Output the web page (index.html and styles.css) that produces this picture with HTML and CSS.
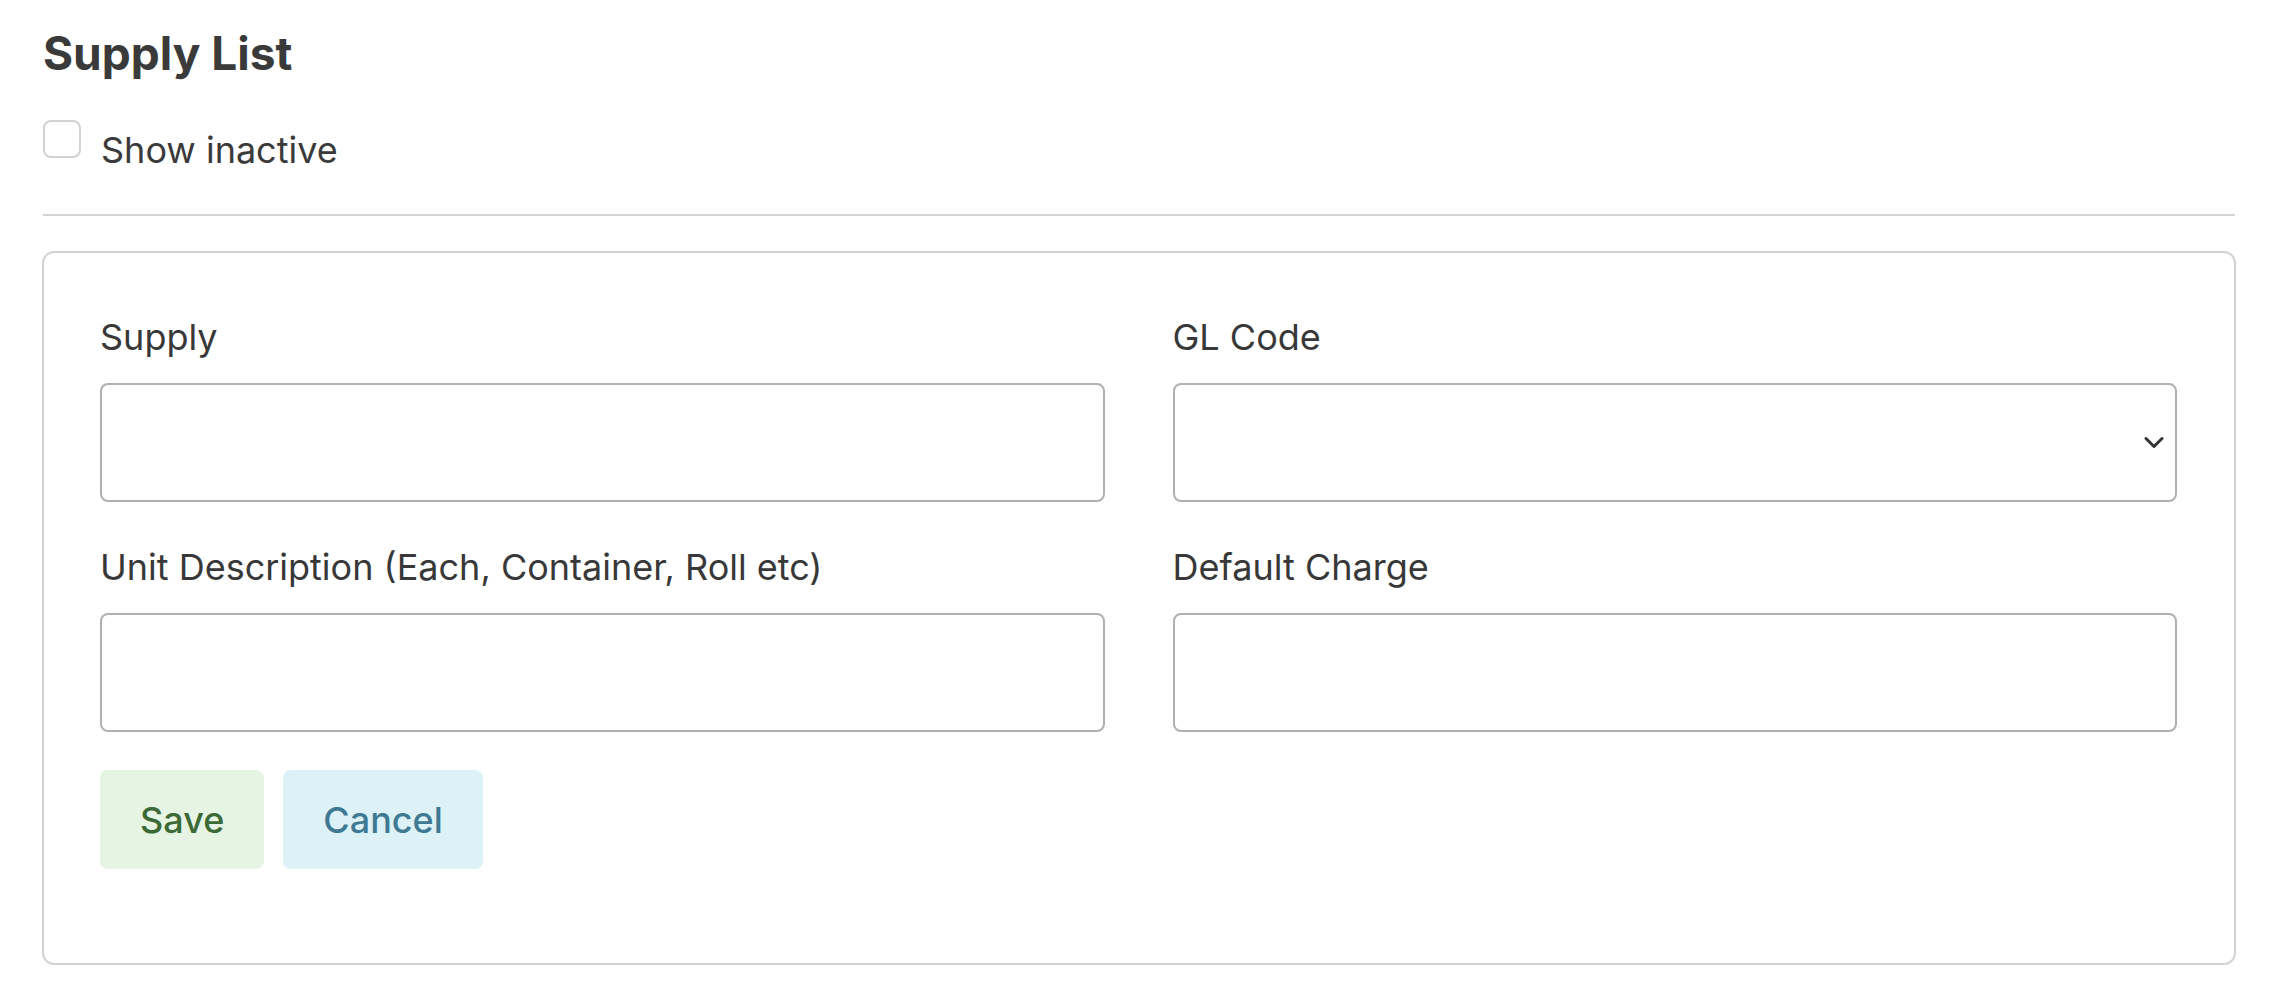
FILE: index.html
```html
<!DOCTYPE html>
<html lang="en">
<head>
<meta charset="utf-8">
<title>Supply List</title>
<link rel="stylesheet" href="styles.css">
</head>
<body>
<div class="page">
  <h1 class="title">Supply List</h1>
  <label class="check-row">
    <input type="checkbox" class="check">
    <span class="check-text">Show inactive</span>
  </label>
  <hr class="rule">
  <form class="card">
    <div class="grid">
      <div class="group">
        <label class="label">Supply</label>
        <input class="field" type="text">
      </div>
      <div class="group">
        <label class="label">GL Code</label>
        <div class="select-wrap">
          <select class="field select"><option></option></select>
          <svg class="chevron" viewBox="0 0 20 14" width="20" height="14"><path d="M2 2.5 L10 10.5 L18 2.5" fill="none" stroke="#333" stroke-width="3" stroke-linecap="round" stroke-linejoin="round"/></svg>
        </div>
      </div>
      <div class="group">
        <label class="label">Unit Description (Each, Container, Roll etc)</label>
        <input class="field" type="text">
      </div>
      <div class="group">
        <label class="label">Default Charge</label>
        <input class="field" type="text">
      </div>
    </div>
    <div class="actions">
      <button type="button" class="btn btn-save">Save</button>
      <button type="button" class="btn btn-cancel">Cancel</button>
    </div>
  </form>
</div>
</body>
</html>
```

FILE: styles.css
```css
* { box-sizing: border-box; }
html, body { margin: 0; padding: 0; background: #fff; }
body {
  font-family: Inter, "Noto Sans", "Liberation Sans", sans-serif;
  color: #333;
}
.page {
  padding: 25px 42px 0 42px;
}
.title {
  margin: 0;
  font-size: 46px;
  line-height: 57px;
  font-weight: 700;
  color: #3a3a3a;
  padding-left: 1px;
}
.check-row {
  display: flex;
  align-items: flex-start;
  margin-top: 38px;
  padding-left: 1px;
}
.check {
  appearance: none;
  -webkit-appearance: none;
  width: 38px;
  height: 38px;
  margin: 0;
  border: 2px solid #d2d2d2;
  border-radius: 8px;
  background: #fff;
  flex: none;
}
.check-text {
  margin-left: 20px;
  margin-top: 3px;
  font-size: 36px;
  line-height: 54px;
  color: #3a3a3a;
}
.rule {
  margin: 37px 1px 0 1px;
  border: 0;
  height: 2px;
  background: #d4d4d4;
}
.card {
  margin-top: 35px;
  border: 2px solid #d3d3d3;
  border-radius: 12px;
  padding: 57px 57px 56px 56px;
}
.grid {
  display: grid;
  grid-template-columns: 1fr 1fr;
  column-gap: 68px;
}
.group {
  display: flex;
  flex-direction: column;
  margin-bottom: 38px;
}
.label {
  font-size: 36px;
  line-height: 54px;
  color: #383838;
  margin-bottom: 19px;
}
.field {
  display: block;
  width: 100%;
  height: 119px;
  border: 2px solid #b0b0b0;
  border-radius: 8px;
  background: #fff;
  font-family: inherit;
  font-size: 36px;
  padding: 0 20px;
  margin: 0;
  outline: none;
}
.select-wrap {
  position: relative;
}
.select {
  appearance: none;
  -webkit-appearance: none;
}
.chevron {
  position: absolute;
  right: 13px;
  top: 53px;
  pointer-events: none;
}
.actions {
  display: flex;
  gap: 19px;
  margin-bottom: 38px;
}
.btn {
  height: 99px;
  border: 0;
  border-radius: 8px;
  padding: 0 40px;
  font-family: inherit;
  font-size: 36px;
  font-weight: 500;
  cursor: pointer;
}
.btn-save {
  background: #e6f4e4;
  color: #3c6a36;
}
.btn-cancel {
  background: #ddf2f6;
  color: #3f7993;
}
```
